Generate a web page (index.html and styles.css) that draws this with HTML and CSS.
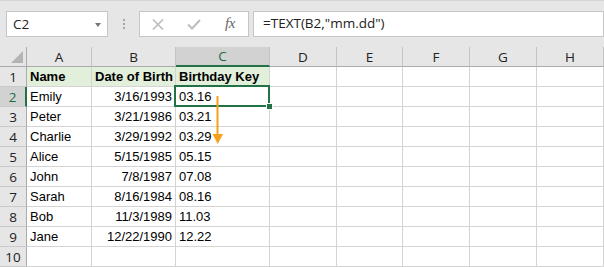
FILE: index.html
```html
<!DOCTYPE html>
<html>
<head>
<meta charset="utf-8">
<link rel="stylesheet" href="styles.css">
</head>
<body>
<div class="app">
  <div class="toolbar">
    <div class="namebox">
      <span class="nb-text">C2</span>
      <span class="nb-arrow"></span>
    </div>
    <div class="grip"><i></i><i></i><i></i></div>
    <div class="fbuttons">
      <svg class="ic-x" width="12" height="11" viewBox="0 0 12 11"><path d="M1 0.5 L11 10.5 M11 0.5 L1 10.5" stroke="#bdbdbd" stroke-width="1.6" fill="none"/></svg>
      <svg class="ic-check" width="14" height="11" viewBox="0 0 14 11"><path d="M1 5.5 L5 9.5 L13 1" stroke="#bdbdbd" stroke-width="2" fill="none"/></svg>
      <span class="fx">fx</span>
    </div>
    <div class="formula">=TEXT(B2,"mm.dd")</div>
  </div>

  <div class="sheet">
    <div class="grid">
      <div class="ch corner"><span class="tri"></span></div>
      <div class="ch">A</div>
      <div class="ch">B</div>
      <div class="ch sel">C</div>
      <div class="ch">D</div>
      <div class="ch">E</div>
      <div class="ch">F</div>
      <div class="ch">G</div>
      <div class="ch">H</div>

      <div class="rh">1</div>
      <div class="c head">Name</div>
      <div class="c head">Date of Birth</div>
      <div class="c head">Birthday Key</div>
      <div class="c"></div><div class="c"></div><div class="c"></div><div class="c"></div><div class="c"></div>

      <div class="rh sel">2</div>
      <div class="c">Emily</div>
      <div class="c r">3/16/1993</div>
      <div class="c">03.16</div>
      <div class="c"></div><div class="c"></div><div class="c"></div><div class="c"></div><div class="c"></div>

      <div class="rh">3</div>
      <div class="c">Peter</div>
      <div class="c r">3/21/1986</div>
      <div class="c">03.21</div>
      <div class="c"></div><div class="c"></div><div class="c"></div><div class="c"></div><div class="c"></div>

      <div class="rh">4</div>
      <div class="c">Charlie</div>
      <div class="c r">3/29/1992</div>
      <div class="c">03.29</div>
      <div class="c"></div><div class="c"></div><div class="c"></div><div class="c"></div><div class="c"></div>

      <div class="rh">5</div>
      <div class="c">Alice</div>
      <div class="c r">5/15/1985</div>
      <div class="c">05.15</div>
      <div class="c"></div><div class="c"></div><div class="c"></div><div class="c"></div><div class="c"></div>

      <div class="rh">6</div>
      <div class="c">John</div>
      <div class="c r">7/8/1987</div>
      <div class="c">07.08</div>
      <div class="c"></div><div class="c"></div><div class="c"></div><div class="c"></div><div class="c"></div>

      <div class="rh">7</div>
      <div class="c">Sarah</div>
      <div class="c r">8/16/1984</div>
      <div class="c">08.16</div>
      <div class="c"></div><div class="c"></div><div class="c"></div><div class="c"></div><div class="c"></div>

      <div class="rh">8</div>
      <div class="c">Bob</div>
      <div class="c r">11/3/1989</div>
      <div class="c">11.03</div>
      <div class="c"></div><div class="c"></div><div class="c"></div><div class="c"></div><div class="c"></div>

      <div class="rh">9</div>
      <div class="c">Jane</div>
      <div class="c r">12/22/1990</div>
      <div class="c">12.22</div>
      <div class="c"></div><div class="c"></div><div class="c"></div><div class="c"></div><div class="c"></div>

      <div class="rh">10</div>
      <div class="c"></div><div class="c"></div><div class="c"></div>
      <div class="c"></div><div class="c"></div><div class="c"></div><div class="c"></div><div class="c"></div>
    </div>

    <div class="selection"><span class="handle"></span></div>
    <svg class="arrow" width="14" height="50" viewBox="0 0 14 50"><path d="M6.5 0 V40" stroke="#f7a11a" stroke-width="2" fill="none"/><path d="M1.5 38 L12 38 L6.75 48 Z" fill="#f7a11a"/></svg>
  </div>
</div>
</body>
</html>
```

FILE: styles.css
```css
* { box-sizing: border-box; }
html, body { margin: 0; padding: 0; background: #fff; }
.app { width: 604px; height: 267px; overflow: hidden; }

.toolbar {
  height: 47px;
  background: #e6e6e6;
  border-top: 1px solid #d4d4d4;
  display: flex;
  align-items: flex-start;
  padding: 10px 0 0 6px;
  font-family: "Open Sans", "Noto Sans", sans-serif;
}
.namebox {
  width: 102px;
  height: 26px;
  background: #fff;
  border: 1px solid #c6c6c6;
  display: flex;
  align-items: center;
  justify-content: space-between;
  padding: 0 6px 0 6px;
}
.nb-text { font-size: 13.5px; color: #222; }
.nb-arrow {
  width: 0; height: 0;
  border-left: 3.5px solid transparent;
  border-right: 3.5px solid transparent;
  border-top: 4px solid #777;
  margin-top: 1px;
}
.grip {
  width: 31px;
  height: 26px;
  display: flex;
  flex-direction: column;
  align-items: center;
  justify-content: center;
  gap: 2px;
}
.grip i { display: block; width: 2px; height: 2px; background: #a6a6a6; }
.fbuttons {
  width: 110px;
  height: 26px;
  background: #fff;
  border: 1px solid #c6c6c6;
  display: flex;
  align-items: center;
  padding-left: 12px;
}
.ic-check { margin-left: 23px; }
.fx {
  margin-left: 24px;
  font-family: "Liberation Serif", serif;
  font-style: italic;
  font-size: 15px;
  color: #666;
  letter-spacing: -0.5px;
  margin-top: -2px;
}
.formula {
  margin-left: 4px;
  width: 351px;
  height: 26px;
  background: #fff;
  border: 1px solid #c6c6c6;
  font-size: 13.5px;
  color: #222;
  padding-left: 9px;
  line-height: 23px;
}

.sheet { position: relative; }
.grid {
  display: grid;
  grid-template-columns: 27px 65px 84px 94px 67px 66px 67px 67px 67px;
  grid-auto-rows: 20px;
  font-family: "Liberation Sans", Arial, sans-serif;
}
.ch {
  background: #e6e6e6;
  border-bottom: 1px solid #ababab;
  border-right: 1px solid #c4c4c4;
  font-family: "Open Sans", "Noto Sans", sans-serif;
  font-size: 13.5px;
  color: #222;
  text-align: center;
  line-height: 20px;
}
.ch.sel {
  background: #d2d2d2;
  color: #1e6b41;
  border-bottom: 2px solid #217346;
  line-height: 19px;
}
.corner { position: relative; border-right: 1px solid #ababab; }
.corner .tri {
  position: absolute;
  right: 3px;
  bottom: 3px;
  width: 0; height: 0;
  border-left: 12px solid transparent;
  border-bottom: 12px solid #b4b4b4;
}
.rh {
  background: #e6e6e6;
  border-right: 1px solid #ababab;
  border-bottom: 1px solid #c9c9c9;
  font-family: "Open Sans", "Noto Sans", sans-serif;
  font-size: 13.5px;
  color: #222;
  text-align: center;
  line-height: 20px;
}
.rh.sel {
  background: #d2d2d2;
  color: #1e6b41;
  border-right: 2px solid #217346;
}
.c {
  border-right: 1px solid #d4d4d4;
  border-bottom: 1px solid #d4d4d4;
  font-size: 13px;
  color: #000;
  padding: 0 3px;
  line-height: 20px;
  white-space: nowrap;
}
.c.r { text-align: right; padding-right: 3px; }
.c.head { background: #e2efda; font-weight: bold; }

.selection {
  position: absolute;
  left: 174px;
  top: 38px;
  width: 96px;
  height: 22px;
  border: 2px solid #217346;
}
.handle {
  position: absolute;
  right: -5px;
  bottom: -5px;
  width: 7px;
  height: 7px;
  background: #217346;
  border: 1px solid #fff;
}
.arrow {
  position: absolute;
  left: 211px;
  top: 49px;
}
```
